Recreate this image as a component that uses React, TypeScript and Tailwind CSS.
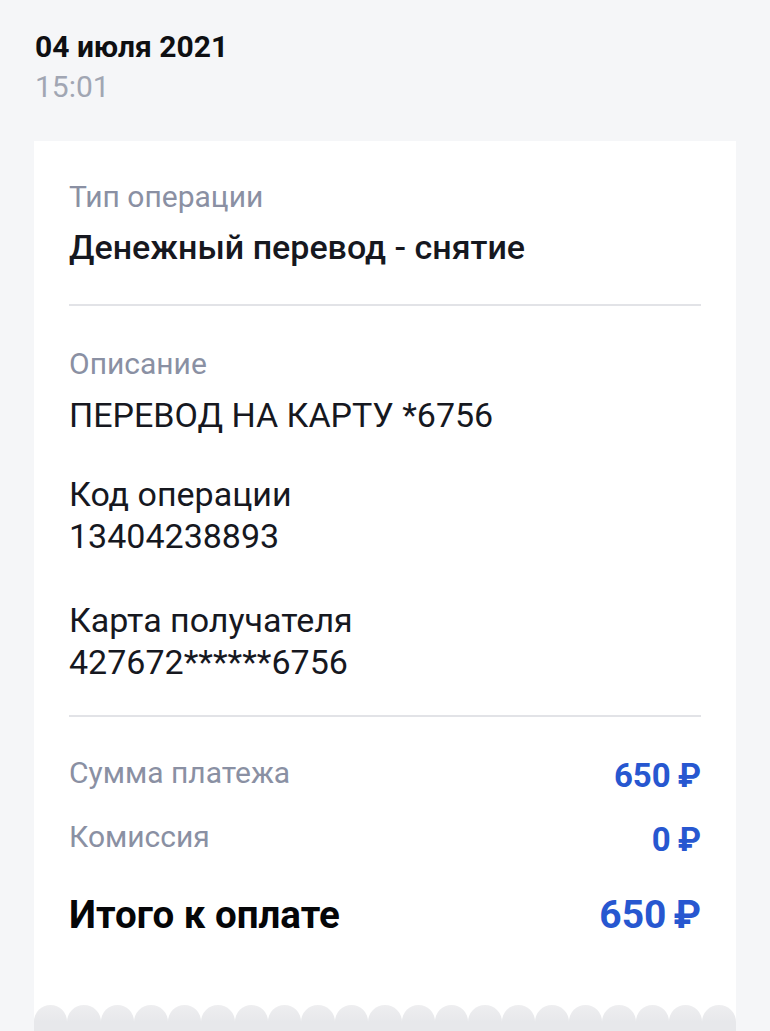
const font = { fontFamily: 'Roboto, "Noto Sans", sans-serif' };

function Field({ label, value }: { label: string; value: string }) {
  return (
    <div className="text-[34px] leading-[42px] text-[#16181f]">
      <div>{label}</div>
      <div>{value}</div>
    </div>
  );
}

function Rub({ value }: { value: string }) {
  return (
    <>
      {value}
      <span className="ml-[7px]">₽</span>
    </>
  );
}

function AmountRow({ label, amount }: { label: string; amount: string }) {
  return (
    <div className="flex items-start justify-between">
      <span className="text-[30px] leading-[36px] text-[#8a90a3]">{label}</span>
      <span className="text-[33px] leading-[42px] font-bold text-[#2757d0]">
        <Rub value={amount} />
      </span>
    </div>
  );
}

export default function App() {
  return (
    <div className="h-[1031px] overflow-hidden bg-[#f5f6f8]" style={font}>
      <div className="pt-[27px] px-[35px]">
        <div className="text-[30px] leading-[40px] font-bold text-[#0e0f12]">04 июля 2021</div>
        <div className="text-[30px] leading-[40px] text-[#a1a6b3]">15:01</div>
      </div>

      <div className="mt-[34px] mx-[34px] bg-white">
        <div className="px-[35px] pt-[38px] pb-[66px]">
          <div className="text-[30px] leading-[36px] text-[#8a90a3]">Тип операции</div>
          <div className="mt-[10px] text-[34px] leading-[44px] font-medium text-[#16181f]">
            Денежный перевод - снятие
          </div>

          <div className="mt-[35px] h-[2px] bg-[#e2e3e7]" />

          <div className="mt-[40px] text-[30px] leading-[36px] text-[#8a90a3]">Описание</div>
          <div className="mt-[11px] text-[34px] leading-[44px] text-[#16181f]">ПЕРЕВОД НА КАРТУ *6756</div>

          <div className="mt-[36px]">
            <Field label="Код операции" value="13404238893" />
          </div>
          <div className="mt-[42px]">
            <Field label="Карта получателя" value="427672******6756" />
          </div>

          <div className="mt-[32px] h-[2px] bg-[#e2e3e7]" />

          <div className="mt-[38px] flex flex-col gap-[22px]">
            <AmountRow label="Сумма платежа" amount="650" />
            <AmountRow label="Комиссия" amount="0" />
          </div>
          <div className="mt-[30px] flex items-baseline justify-between">
            <span className="text-[38.5px] leading-[48px] font-bold text-[#050608]">Итого к оплате</span>
            <span className="text-[39px] leading-[48px] font-bold text-[#2757d0]">
              <Rub value="650" />
            </span>
          </div>
        </div>
      </div>

      {/* scalloped bottom edge of the receipt */}
      <div className="mx-[34px] bg-white">
        <div className="flex">
          {Array.from({ length: 21 }).map((_, i) => (
            <div key={i} className="flex-1 h-[17px] rounded-t-full bg-gradient-to-b from-[#eeeef0] to-[#e7e8eb]" />
          ))}
        </div>
        <div className="h-[40px] bg-[#e7e8eb]" />
      </div>
    </div>
  );
}
